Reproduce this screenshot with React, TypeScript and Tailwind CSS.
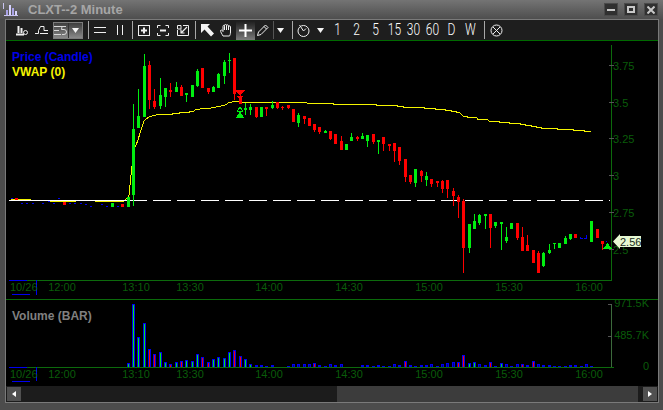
import React from "react";

type Candle = [number, number, number, number, number, "g" | "r"];
const candles: Candle[] = [
  [16, 198, 198, 200, 200, "r"], [64, 202, 202, 205, 205, "r"], [112, 203, 203, 207, 207, "g"], [122, 204, 204, 207, 207, "r"],
  [128, 197, 197, 207, 207, "g"], [133, 104, 129, 195, 206, "g"], [138, 89, 116, 128, 128, "g"], [144, 54, 66, 117, 117, "g"],
  [149, 61, 65, 100, 109, "r"], [154, 89, 101, 107, 109, "r"], [160, 78, 95, 106, 109, "g"], [165, 88, 88, 97, 107, "g"],
  [170, 83, 90, 92, 97, "r"], [176, 82, 87, 92, 92, "g"], [181, 85, 87, 96, 96, "r"], [186, 93, 93, 95, 102, "g"],
  [192, 85, 85, 97, 97, "g"], [197, 69, 71, 86, 87, "g"], [202, 68, 68, 88, 88, "r"], [208, 88, 88, 92, 94, "r"],
  [213, 86, 87, 92, 92, "g"], [218, 73, 74, 88, 88, "g"], [224, 60, 62, 76, 84, "g"], [229, 53, 60, 61, 73, "g"],
  [234, 58, 58, 94, 100, "r"], [240, 90, 97, 104, 104, "r"], [245, 103, 108, 110, 115, "g"], [250, 104, 107, 110, 115, "g"],
  [256, 107, 107, 117, 118, "r"], [261, 107, 107, 117, 117, "g"], [266, 107, 107, 109, 116, "r"], [272, 101, 105, 108, 109, "g"],
  [277, 102, 102, 108, 109, "r"], [282, 106, 107, 108, 110, "r"], [288, 105, 105, 108, 109, "r"], [293, 109, 109, 122, 122, "r"],
  [298, 113, 115, 123, 127, "g"], [304, 116, 116, 119, 124, "r"], [309, 118, 118, 126, 126, "r"], [314, 124, 124, 130, 132, "r"],
  [319, 127, 127, 132, 134, "r"], [325, 130, 131, 133, 133, "g"], [330, 131, 131, 139, 140, "r"], [335, 134, 134, 144, 144, "r"],
  [341, 136, 141, 150, 150, "r"], [346, 144, 144, 150, 150, "g"], [351, 133, 137, 141, 141, "g"], [357, 136, 137, 139, 141, "r"],
  [362, 133, 136, 139, 139, "g"], [367, 135, 135, 141, 147, "g"], [373, 134, 134, 142, 144, "r"], [378, 140, 140, 142, 154, "g"],
  [383, 137, 137, 144, 151, "r"], [389, 144, 144, 146, 151, "r"], [394, 143, 143, 151, 162, "r"], [399, 147, 147, 161, 165, "r"],
  [405, 159, 159, 177, 182, "r"], [410, 175, 175, 182, 184, "r"], [415, 169, 169, 183, 187, "g"], [421, 170, 171, 176, 182, "r"],
  [426, 172, 176, 180, 186, "g"], [431, 179, 179, 184, 187, "r"], [437, 181, 181, 183, 187, "r"], [442, 180, 181, 189, 193, "r"],
  [447, 180, 180, 189, 198, "r"], [453, 188, 191, 196, 206, "r"], [458, 195, 197, 202, 218, "r"], [463, 199, 201, 248, 273, "r"],
  [469, 224, 224, 248, 253, "g"], [474, 214, 221, 229, 229, "g"], [479, 214, 215, 223, 225, "g"], [485, 214, 214, 216, 229, "g"],
  [490, 214, 214, 228, 248, "r"], [495, 222, 222, 226, 228, "g"], [501, 222, 222, 224, 250, "g"], [506, 227, 237, 241, 243, "g"],
  [511, 223, 223, 229, 229, "g"], [517, 223, 223, 238, 240, "r"], [522, 227, 237, 251, 251, "r"], [527, 235, 245, 251, 251, "r"],
  [533, 250, 250, 263, 263, "r"], [538, 251, 253, 273, 273, "r"], [543, 252, 253, 266, 267, "g"], [549, 244, 250, 253, 254, "g"],
  [554, 243, 243, 244, 249, "g"], [559, 243, 243, 248, 248, "g"], [565, 236, 238, 244, 244, "g"], [570, 234, 234, 239, 240, "g"],
  [575, 234, 234, 238, 238, "r"], [591, 221, 221, 242, 242, "g"], [597, 229, 229, 238, 238, "r"], [602, 241, 241, 244, 250, "r"],
];

const vwap =
  "11,199 30,199 30,200 50,200 50,201 75,201 75,200 95,200 95,201 124,201 128,197 129,195 130,185 131,175 132,166 135,147 136,145 138,140 140,133 142,127 144,121 146,119 149,117 152,116 156,115 159,114 172,114 172,113 179,113 179,112 189,112 189,111 194,111 196,109 200,109 211,108 211,107 216,107 221,106 225,105 227,104 229,102 232,102 238,101 240,102 306,102 307,103 333,103 333,104 376,104 376,105 397,105 397,106 403,106 403,107 424,107 424,108 435,108 435,109 445,109 445,110 451,110 451,111 456,111 456,112 460,113 463,116 467,116 467,117 477,118 477,119 487,119 489,121 499,121 499,122 509,122 509,123 520,123 520,124 525,124 525,125 531,125 531,126 536,126 536,127 541,127 541,128 557,128 557,129 573,129 573,130 584,130 584,131 591,131";

const premarketDots: [number, number][] = [
  [11, 198], [21, 203], [26, 203], [32, 203], [42, 203], [48, 201], [53, 203], [58, 198], [69, 203], [74, 203], [80, 203],
  [85, 204], [90, 206], [101, 204], [106, 206], [117, 206],
];

const volG = [[128, 278, "g"], [133, 103, "g"], [138, 200, "g"], [144, 160, "g"], [149, 238, "r"], [154, 253, "r"], [160, 247, "g"], [165, 277, "g"], [170, 283, "r"], [176, 275, "g"], [181, 274, "r"], [186, 271, "g"], [192, 274, "g"], [197, 253, "g"], [202, 262, "r"], [208, 277, "r"], [213, 268, "g"], [218, 262, "g"], [224, 265, "g"], [229, 247, "g"], [234, 241, "r"], [240, 259, "r"], [245, 268, "g"], [250, 283, "g"], [256, 286, "b"], [261, 286, "b"], [266, 288, "b"], [272, 286, "b"], [288, 288, "b"], [293, 283, "b"], [298, 283, "b"], [304, 283, "b"], [309, 283, "b"], [314, 280, "r"], [319, 286, "b"], [325, 288, "b"], [330, 283, "b"], [335, 286, "b"], [341, 283, "b"], [362, 286, "b"], [367, 286, "b"], [373, 288, "b"], [378, 286, "b"], [383, 289, "b"], [389, 288, "b"], [394, 283, "b"], [399, 286, "b"], [405, 274, "r"], [410, 286, "b"], [415, 288, "b"], [421, 286, "b"], [426, 286, "b"], [431, 283, "b"], [437, 288, "b"], [442, 283, "b"], [447, 280, "b"], [453, 277, "b"], [458, 277, "r"], [463, 256, "r"], [469, 280, "g"], [474, 277, "g"], [479, 283, "b"], [485, 286, "b"], [490, 277, "r"], [495, 288, "b"], [501, 280, "g"], [506, 283, "b"], [511, 288, "b"], [517, 283, "b"], [522, 283, "r"], [527, 286, "b"], [533, 274, "r"], [538, 283, "b"], [543, 286, "b"], [549, 286, "b"], [554, 288, "b"], [559, 288, "b"], [565, 288, "b"], [570, 286, "b"], [575, 286, "b"], [581, 288, "b"], [586, 283, "b"], [591, 288, "b"]] as [number, number, string][];

const times: [string, number][] = [
  ["12:00", 62], ["13:10", 136], ["13:30", 190], ["14:00", 269], ["14:30", 349], ["15:00", 429], ["15:30", 509], ["16:00", 589],
];
const priceLabels: [string, number][] = [["3.75", 65], ["3.5", 102], ["3.25", 138], ["3", 175], ["2.75", 212], ["2.5", 249]];

const GREEN = "#00ee10";
const RED = "#ff0000";
const AXIS = "#0c6a0c";
const LABEL = "#0a5c0a";
const font = "'Liberation Sans', Arial, sans-serif";

function Icon({ children, w = 14, h = 14 }: { children: React.ReactNode; w?: number; h?: number }) {
  return (
    <svg width={w} height={h} viewBox={`0 0 ${w} ${h}`} fill="none" stroke="#f0f0f0" strokeWidth="1">
      {children}
    </svg>
  );
}

function Cell({ w, children }: { w: string; children?: React.ReactNode }) {
  return <div className={`flex h-full items-center justify-center shrink-0 ${w}`}>{children}</div>;
}

function Sep({ ml, dark }: { ml: string; dark?: boolean }) {
  return <div className={`w-px h-[18px] shrink-0 ${ml} ${dark ? "bg-[#555555]" : "bg-[#a8a8a8]"}`} />;
}

function Tri() {
  return (
    <svg width="7" height="5" viewBox="0 0 7 5">
      <polygon points="0,0 7,0 3.5,5" fill="#f4f4f4" />
    </svg>
  );
}

function Num({ t }: { t: string }) {
  return (
    <div className="flex h-full w-[19px] shrink-0 items-center justify-center text-[16px] leading-none font-light text-white font-['Roboto',sans-serif] scale-x-75">
      {t}
    </div>
  );
}

function Candles() {
  return (
    <g shapeRendering="crispEdges">
      {candles.map(([c, wt, bt, bb, wb, k], i) => {
        const f = k === "g" ? GREEN : RED;
        return (
          <g key={i} fill={f}>
            <rect x={c} y={wt} width={1} height={wb - wt} />
            <rect x={c - 1} y={bt} width={3} height={Math.max(bb - bt, 1)} />
          </g>
        );
      })}
    </g>
  );
}

function TimeAxis({ y }: { y: number }) {
  return (
    <g fontFamily={font} fontSize="11" fill={LABEL}>
      <text x="10" y={y}>10/26</text>
      {times.map(([t, x]) => (
        <text key={t} x={x} y={y} textAnchor="middle">{t}</text>
      ))}
    </g>
  );
}

function WinBtn({ children }: { children: React.ReactNode }) {
  return (
    <div className="flex h-[13px] w-[14px] items-center justify-center bg-[#303030] border border-[#4a4a4a]">
      {children}
    </div>
  );
}

export default function App() {
  return (
    <div className="w-[663px] h-[410px] overflow-hidden flex flex-col bg-[#4c4c4c]" style={{ fontFamily: font }}>
      <div className="h-[19px] shrink-0 flex items-center bg-linear-to-b from-[#747474] to-[#4e4e4e]">
        <div className="w-[28px] pl-[3px] flex items-center shrink-0">
          <svg width="15" height="13" viewBox="0 0 15 13" shapeRendering="crispEdges">
            <path d="M0 0h1v13h14v-1H1z" fill="#c8c4f0" />
            <rect x="3" y="7" width="2" height="5" fill="#a9a2e6" />
            <rect x="6" y="2" width="2" height="10" fill="#d8d4ff" />
            <rect x="9" y="5" width="2" height="7" fill="#a9a2e6" />
            <rect x="12" y="8" width="2" height="4" fill="#d8d4ff" />
          </svg>
        </div>
        <div className="text-[13px] font-bold leading-none text-[#a6a6a6]">CLXT--2 Minute</div>
        <div className="ml-auto mr-[5px] flex gap-[6px]">
          <WinBtn><div className="w-[8px] h-[2px] bg-[#c8c8c8]" /></WinBtn>
          <WinBtn><div className="w-[8px] h-[7px] border-2 border-[#c8c8c8]" /></WinBtn>
          <WinBtn>
            <svg width="8" height="8" viewBox="0 0 8 8"><path d="M0.5 0.5L7.5 7.5M7.5 0.5L0.5 7.5" stroke="#c8c8c8" strokeWidth="2" /></svg>
          </WinBtn>
        </div>
      </div>

      <div className="ml-[5px] w-[654px] h-[384px] shrink-0 border border-[#7a7a7a] flex flex-col bg-black">
        <div className="h-[21px] shrink-0 flex items-center bg-[#1e1e1e] border-b border-[#006a00] pl-[7px]">
          <Cell w="w-[18px]">
            <Icon w={12} h={11}>
              <path d="M2.5 1V8M5.5 3V8M0 9.5H8" strokeWidth="2" />
              <circle cx="9.5" cy="7.5" r="2" />
            </Icon>
          </Cell>
          <Cell w="w-[20px]">
            <Icon w={13} h={10}>
              <path d="M0 8.5H3.5V5.5L5.5 1.5H9V5.5H13M5 8.5H13" />
            </Icon>
          </Cell>
          <div className="ml-[2px] w-[30px] h-[17px] shrink-0 flex items-center bg-linear-to-b from-[#3e3e3e] to-[#8a8a8a] border border-[#7c7c7c]">
            <div className="w-[14px] flex justify-start">
              <Icon w={13} h={9}>
                <path d="M0 .5H7M0 4.5H5M0 8.5H7" stroke="#d8d8d8" />
                <path d="M7 .5H12M8 .5L7.5 3.5H10A2.4 2.4 0 0 1 10 8.5H8" stroke="#d8d8d8" />
              </Icon>
            </div>
            <div className="w-px h-full bg-[#333333]" />
            <div className="flex-1 flex justify-center"><Tri /></div>
          </div>
          <Sep ml="ml-[5px]" />
          <Cell w="w-[22px]">
            <Icon w={12} h={6}><path d="M0 .5H12M0 5.5H12" /></Icon>
          </Cell>
          <Cell w="w-[17px]">
            <Icon w={6} h={10}><path d="M.5 0V10M5.5 0V10" /></Icon>
          </Cell>
          <Sep ml="ml-[4px]" />
          <Cell w="w-[22px]">
            <Icon w={12} h={11}>
              <rect x=".5" y=".5" width="11" height="10" />
              <path d="M6 2.5V8.5M3 5.5H9" strokeWidth="2" />
            </Icon>
          </Cell>
          <Cell w="w-[16px]">
            <Icon w={12} h={11}>
              <path d="M3.5 .5H.5V3M8.5 .5H11.5V3M3.5 10.5H.5V8M8.5 10.5H11.5V8" />
              <path d="M3 5.5H9" strokeWidth="2" />
            </Icon>
          </Cell>
          <Cell w="w-[23px]">
            <Icon w={12} h={11}>
              <path d="M6 .5H11.5V10.5H.5V5" />
              <path d="M.5 .5H4V4H.5z" />
              <path d="M10 2L4 8M4 4.5V8H7.5" strokeWidth="1.2" />
            </Icon>
          </Cell>
          <Sep ml="ml-[1px]" />
          <Cell w="w-[22px]">
            <svg width="13" height="13" viewBox="0 0 13 13"><path d="M0 0H9L6.5 2.5L13 9.5L10 12.5L3.5 5.5L0 9Z" fill="#f4f4f4" /></svg>
          </Cell>
          <Cell w="w-[16px]">
            <Icon w={13} h={13}>
              <path d="M3 12C2 10 .5 8 .5 6.5C1.5 5.5 2.5 6.5 3 7.5V2.5C3 1 4.5 1 4.5 2.5V1.5C4.5 0 6.5 0 6.5 1.5V1.5C6.5 .5 8.5 .5 8.5 2V3C8.5 1.5 10.5 1.5 10.5 3V8C10.5 10 10 11 9.5 12Z" />
              <path d="M4.5 2.5V6M6.5 1.5V6M8.5 2V6" />
            </Icon>
          </Cell>
          <div className="ml-[2px] w-[19px] h-[19px] shrink-0 flex items-center justify-center bg-linear-to-b from-[#1e1e1e] to-[#7c7c7c]">
            <svg width="13" height="13" viewBox="0 0 13 13"><path d="M6.5 0V13M0 6.5H13" stroke="#ffffff" strokeWidth="2" /></svg>
          </div>
          <Cell w="w-[16px]">
            <Icon w={12} h={12}>
              <path d="M.5 11.5L1.5 8L8.5 1L11 3.5L4 10.5Z" />
              <path d="M7 2.5L9.5 5" />
            </Icon>
          </Cell>
          <Sep ml="ml-[2px]" dark />
          <Cell w="w-[12px]"><Tri /></Cell>
          <Sep ml="ml-[6px]" />
          <Cell w="w-[20px]">
            <Icon w={13} h={13}>
              <circle cx="6.5" cy="7" r="5.5" />
              <path d="M2.5 1L6.5 7L9 4.5" />
            </Icon>
          </Cell>
          <Cell w="w-[15px]"><Tri /></Cell>
          {["1", "2", "5", "15", "30", "60", "D", "W"].map((t) => (
            <Num key={t} t={t} />
          ))}
          <Sep ml="ml-[4px]" />
          <Cell w="w-[22px]">
            <Icon w={13} h={13}>
              <circle cx="6.5" cy="6.5" r="5.5" />
              <path d="M3 3L10 10M10 3L3 10" />
            </Icon>
          </Cell>
        </div>

        <div className="h-[259px] shrink-0 border-b border-[#0a6a0a]">
          <svg width="652" height="258" viewBox="6 41 652 258" className="block">
            <g fontFamily={font} fontWeight="bold" fontSize="12">
              <text x="12" y="61" fill="#0000e8">Price (Candle)</text>
              <text x="12" y="76" fill="#f4f400">VWAP (0)</text>
            </g>
            <g shapeRendering="crispEdges">
              <rect x="611" y="45" width="1" height="236" fill={AXIS} />
              <rect x="9" y="280" width="603" height="1" fill={AXIS} />
              {priceLabels.map(([, y]) => (
                <rect key={y} x="609" y={y} width="5" height="1" fill="#555555" />
              ))}
              <rect x="9" y="280" width="18" height="1" fill="#0000f0" />
              <rect x="36" y="280" width="1" height="15" fill="#0000f0" />
              <rect x="12" y="294" width="18" height="1" fill="#0000f0" />
            </g>
            <g fontFamily={font} fontSize="11" fill={LABEL}>
              {priceLabels.map(([t, y]) => (
                <text key={t} x="613" y={y + 4.5}>{t}</text>
              ))}
            </g>
            <TimeAxis y={291} />
            <polyline points={vwap} fill="none" stroke="#f4f400" strokeWidth="1" shapeRendering="crispEdges" />
            <g shapeRendering="crispEdges">
              <rect x="9" y="200" width="138" height="1" fill="#ffffff" />
              <line x1="153" y1="200.5" x2="610" y2="200.5" stroke="#ffffff" strokeWidth="1" strokeDasharray="18 6" />
              {premarketDots.map(([x, y]) => (
                <rect key={`${x}-${y}`} x={x} y={y} width="2" height="1" fill="#0000f0" />
              ))}
            </g>
            <Candles />
            <g shapeRendering="crispEdges">
              <rect x="580" y="237" width="1" height="2" fill="#0000f0" />
              <rect x="581" y="238" width="2" height="1" fill="#0000f0" />
              <rect x="586" y="235" width="1" height="4" fill="#0000f0" />
              <rect x="584" y="238" width="2" height="1" fill="#0000f0" />
              <rect x="606" y="241" width="1" height="1" fill="#0000f0" />
              <polygon points="235,90 245,90 240,96" fill={RED} />
              <polygon points="237,96 243,96 240,100" fill={RED} />
              <polygon points="236,118 244,118 240,111" fill={GREEN} />
              <polygon points="237.5,111 242.5,111 240,107" fill="none" stroke={GREEN} />
              <polygon points="603,249 612,249 607.5,243" fill={GREEN} />
            </g>
            <polygon points="613,241.5 620,234 620,236 641,236 641,247 620,247 620,249" fill="#e6f8d2" />
            <text x="620" y="245.5" fontFamily={font} fontSize="11" fill="#1a2a1a">2.56</text>
          </svg>
        </div>

        <div className="h-[86px] shrink-0">
          <svg width="652" height="86" viewBox="6 300 652 86" className="block">
            <text x="12" y="320" fontFamily={font} fontWeight="bold" fontSize="12" fill="#808080">Volume (BAR)</text>
            <g shapeRendering="crispEdges">
              <rect x="611" y="304" width="1" height="63" fill="#3c6a3c" />
              <rect x="608" y="304" width="4" height="1" fill="#555555" />
              <rect x="608" y="336" width="4" height="1" fill="#555555" />
              {volG.map(([c, v, k]) => {
                const top = Math.round(270 + v / 3);
                return (
                  <g key={c}>
                    <rect x={c - 1} y={top} width="3" height={367 - top} fill="#0000f0" />
                    {367 - top > 2 && (
                      <rect x={c} y={top + 1} width="1" height={366 - top} fill={k === "g" ? GREEN : k === "r" ? RED : "#000090"} />
                    )}
                  </g>
                );
              })}
              <rect x="9" y="367" width="605" height="1" fill={AXIS} />
              <rect x="9" y="367" width="18" height="1" fill="#0000f0" />
              <rect x="36" y="367" width="1" height="14" fill="#0000f0" />
              <rect x="12" y="381" width="18" height="1" fill="#0000f0" />
            </g>
            <g fontFamily={font} fontSize="11" fill={LABEL} textAnchor="end">
              <text x="649" y="307">971.5K</text>
              <text x="649" y="339">485.7K</text>
              <text x="649" y="370">0</text>
            </g>
            <TimeAxis y={378} />
          </svg>
        </div>

        <div className="h-[16px] shrink-0 flex items-center bg-[#1c1c1c]">
          <div className="ml-px w-[14px] h-[14px] shrink-0 flex items-center justify-center bg-[#505050]">
            <svg width="4" height="6" viewBox="0 0 4 6"><polygon points="4,0 4,6 0,3" fill="#ffffff" /></svg>
          </div>
          <div className="ml-[316px] w-[301px] h-full bg-[#3c3c3c] shrink-0" />
          <div className="ml-[5px] w-[14px] h-[14px] shrink-0 flex items-center justify-center bg-[#505050]">
            <svg width="4" height="6" viewBox="0 0 4 6"><polygon points="0,0 0,6 4,3" fill="#ffffff" /></svg>
          </div>
        </div>
      </div>
    </div>
  );
}
